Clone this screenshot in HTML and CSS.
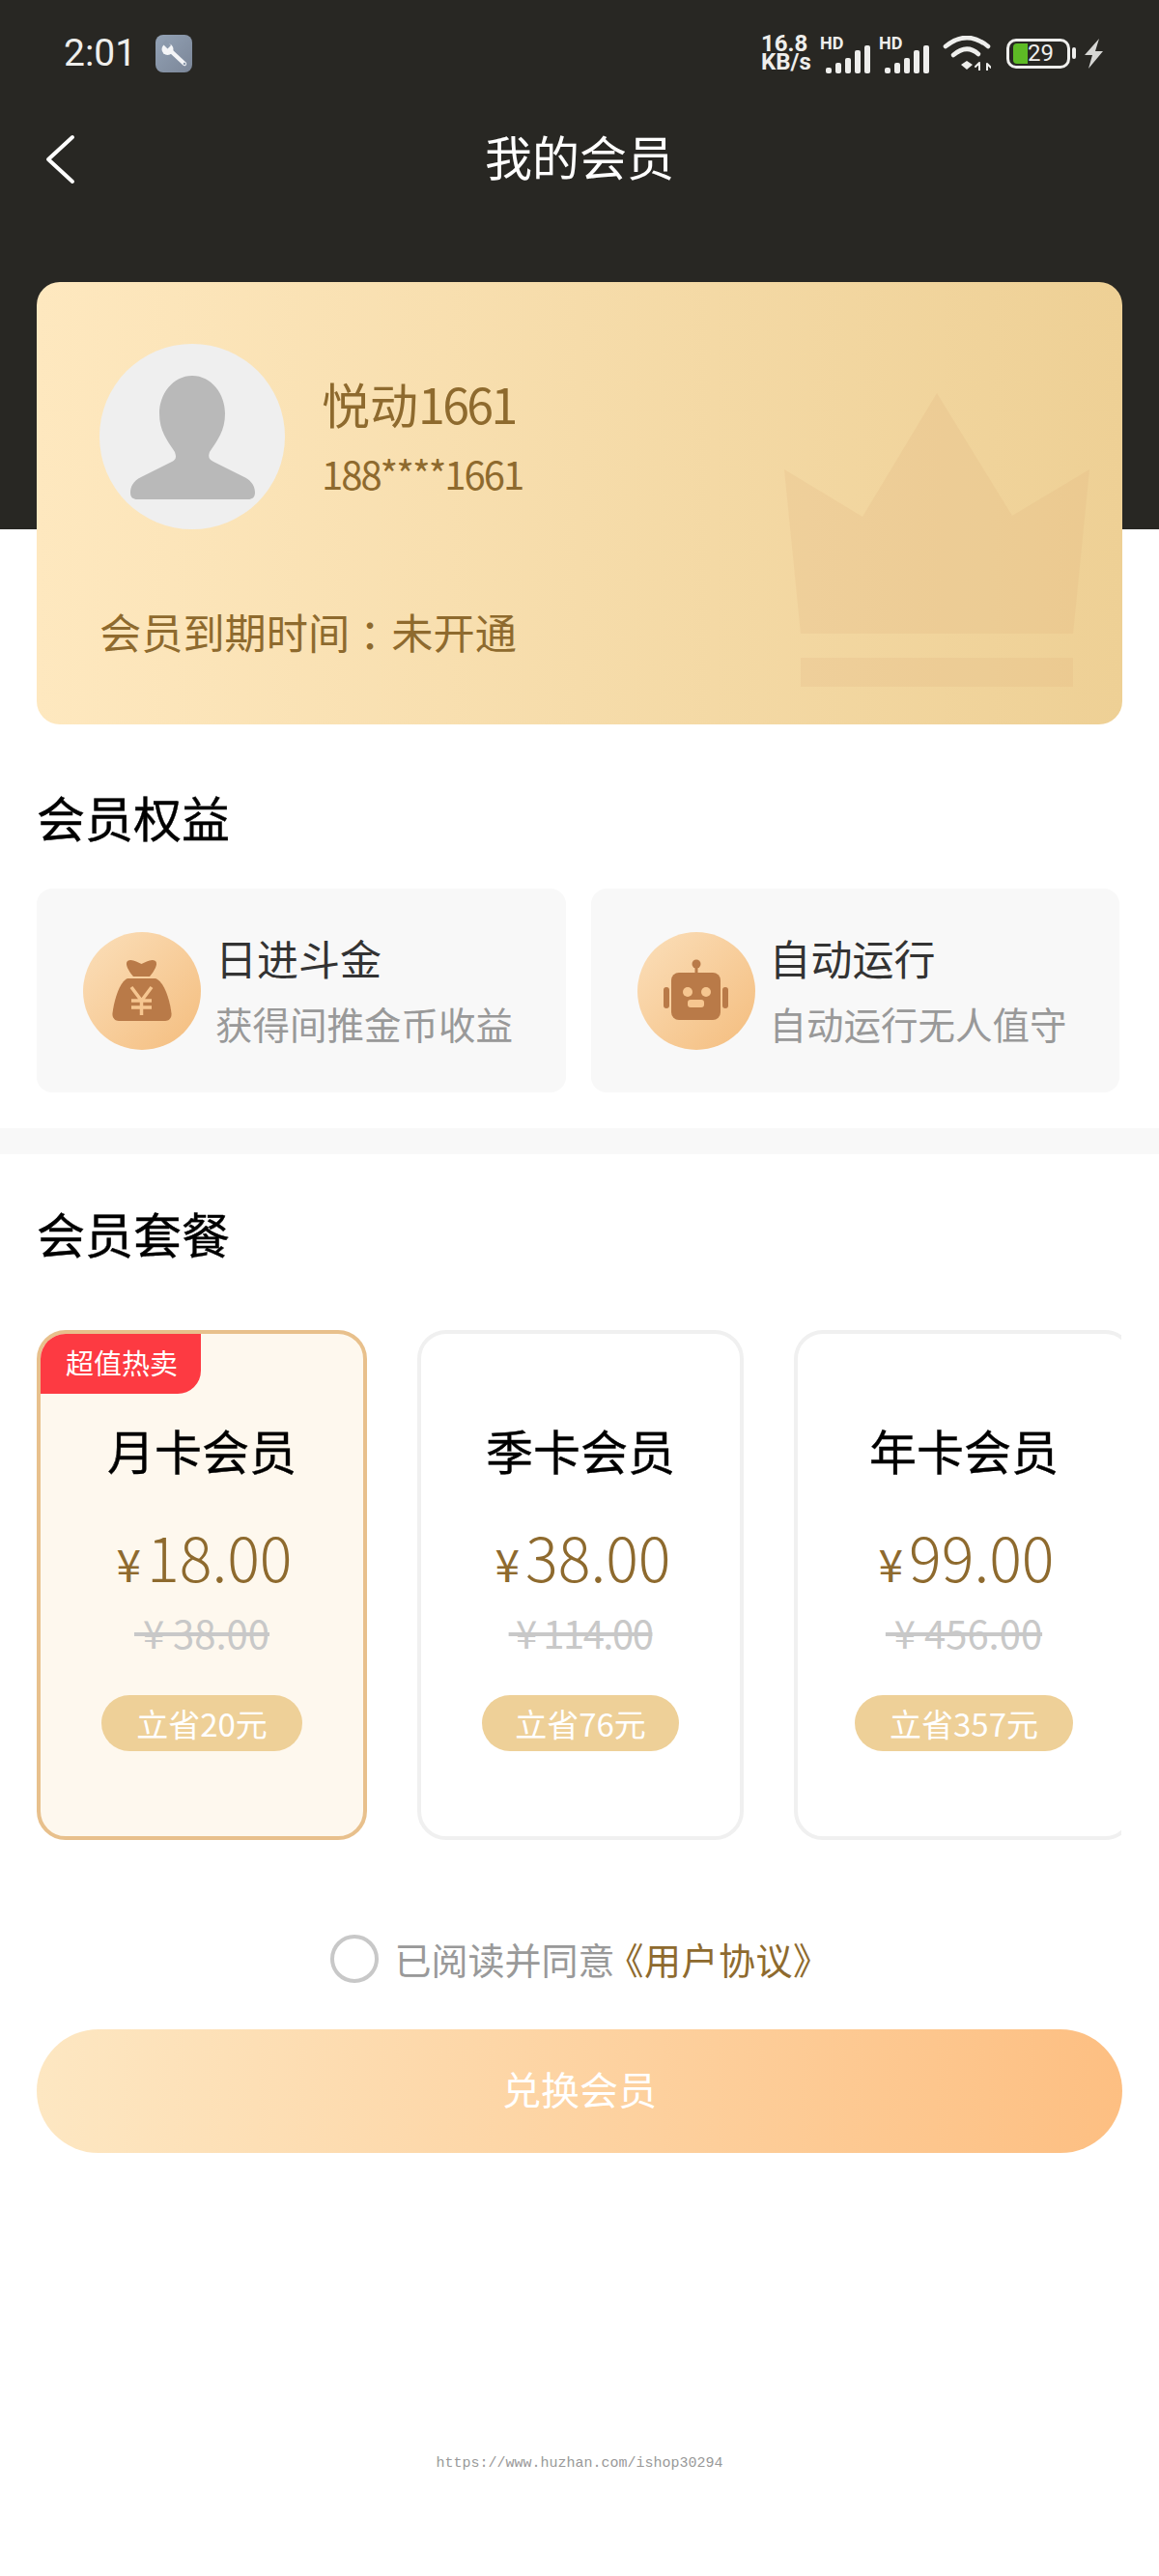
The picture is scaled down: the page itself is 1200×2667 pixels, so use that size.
FILE: index.html
```html
<!DOCTYPE html>
<html lang="zh-CN">
<head>
    <meta charset="UTF-8">
    <meta name="viewport" content="width=device-width, initial-scale=1.0">
    <title>我的会员</title>
    <link rel="stylesheet" href="styles.css">
</head>
<body>
    <div class="page">
        <div class="status-bar">
            <div class="status-left">
                <span class="status-time">2:01</span>
                <svg class="status-tool" width="38" height="39" viewBox="0 0 38 39">
                    <defs>
                        <linearGradient id="toolBg" x1="0" y1="0" x2="1" y2="1">
                            <stop offset="0" stop-color="#93a2b5"/>
                            <stop offset="1" stop-color="#7b8698"/>
                        </linearGradient>
                    </defs>
                    <rect width="38" height="39" rx="8" fill="url(#toolBg)"/>
                    <path d="M16 17 L30 30" stroke="#f4f5f7" stroke-width="4.4" stroke-linecap="round"/>
                    <circle cx="12.5" cy="15" r="6" fill="#f4f5f7"/>
                    <path d="M7 9 L12.500 14.500 L16 11 L11 5Z" fill="#8b99ab"/>
                    <circle cx="30" cy="30" r="1.3" fill="#8b99ab"/>
                </svg>
            </div>
            <div class="status-right">
                <div class="net-speed"><span>16.8</span><span>KB/s</span></div>
                <div class="signal signal-first">
                    <span class="signal-hd">HD</span>
                    <svg width="47" height="30" viewBox="0 0 47 30" fill="#eeeeec">
                        <rect x="0" y="24" width="6" height="6" rx="2"/>
                        <rect x="10" y="19" width="6" height="11" rx="2"/>
                        <rect x="20" y="14" width="6" height="16" rx="2"/>
                        <rect x="30" y="6" width="6" height="24" rx="2"/>
                        <rect x="40" y="1" width="6" height="29" rx="2"/>
                    </svg>
                </div>
                <div class="signal signal-second">
                    <span class="signal-hd">HD</span>
                    <svg width="47" height="30" viewBox="0 0 47 30" fill="#eeeeec">
                        <rect x="0" y="24" width="6" height="6" rx="2"/>
                        <rect x="10" y="19" width="6" height="11" rx="2"/>
                        <rect x="20" y="14" width="6" height="16" rx="2"/>
                        <rect x="30" y="6" width="6" height="24" rx="2"/>
                        <rect x="40" y="1" width="6" height="29" rx="2"/>
                    </svg>
                </div>
                <svg class="wifi" width="50" height="36" viewBox="0 0 50 36" fill="none" stroke="#eeeeec" stroke-linecap="round">
                    <path d="M3 11 Q25 -7 47 11" stroke-width="4.6"/>
                    <path d="M11 20 Q25 8 37 19" stroke-width="4.6"/>
                    <path d="M19 30 L25 26 L31 30 L25 35Z" fill="#eeeeec" stroke="none"/>
                    <path d="M38 36 L38 29 M34 32 L38 28 M46 36 L46 29 M46 29 L50 33" stroke-width="2"/>
                </svg>
                <div class="battery">
                    <div class="battery-body">
                        <div class="battery-fill"></div>
                        <span class="battery-num">29</span>
                    </div>
                    <div class="battery-nub"></div>
                </div>
                <svg class="bolt" width="20" height="31" viewBox="0 0 20 31">
                    <path d="M16 0 L1 17 L9 17 L5 31 L20 13 L12 13Z" fill="#d6d6d4"/>
                </svg>
            </div>
        </div>

        <div class="nav-bar">
            <svg class="nav-back" width="32" height="52" viewBox="0 0 32 52">
                <path d="M28 3 L3 26 L28 49" fill="none" stroke="#fff" stroke-width="4" stroke-linecap="round" stroke-linejoin="round"/>
            </svg>
            <div class="nav-title">我的会员</div>
        </div>

        <div class="member-card">
            <svg class="crown" width="320" height="310" viewBox="0 0 320 310">
                <path d="M0 79 L81 128 L158 0 L236 127 L316 79 L299 249 L17 249Z"/>
                <rect x="17" y="274" width="282" height="30"/>
            </svg>
            <div class="user-row">
                <svg class="avatar" width="192" height="192" viewBox="0 0 192 192">
                    <circle cx="96" cy="96" r="96" fill="#efefef"/>
                    <path d="M96 33 C116 33 130 52 130 72 C130 90 122 100 114 112 C112 118 114 120 118 122 L150 138 C158 142 161 148 161 154 C161 159 158 161 154 161 L39 161 C35 161 32 159 32 154 C32 148 35 142 43 138 L75 122 C79 120 80 118 78 112 C70 100 62 90 62 72 C62 52 76 33 96 33Z" fill="#b9b9b9"/>
                </svg>
                <div class="user-info">
                    <div class="user-name">悦动<span class="user-digits">1661</span></div>
                    <div class="user-phone">188****1661</div>
                </div>
            </div>
            <div class="expire">会员到期时间<span class="full-colon">：</span>未开通</div>
        </div>

        <h2 class="section-title title-benefits">会员权益</h2>
        <div class="benefits">
            <div class="benefit">
                <svg class="benefit-icon" width="122" height="122" viewBox="0 0 122 122">
                    <defs>
                        <linearGradient id="iconBg" x1="0" y1="0" x2="1" y2="1">
                            <stop offset="0" stop-color="#fbdfba"/>
                            <stop offset="1" stop-color="#f4bd7e"/>
                        </linearGradient>
                    </defs>
                    <circle cx="61" cy="61" r="61" fill="url(#iconBg)"/>
                    <path d="M46 30 C50 27 56 31 60.500 33 C65 31 71 27 75 30 C78 33 74 40 69 46 L52 46 C47 40 43 33 46 30Z" fill="#b97a48"/>
                    <path d="M46 48 L75 48 C85 52 90 72 91.500 84 C92 89 89 92 85 92 L37 92 C33 92 30 89 30.500 84 C32 72 37 52 46 48Z" fill="#b97a48"/>
                    <path d="M50 57 L60.500 71 L71 57 M60.500 71 L60.500 86 M50 71 L71 71 M50 78 L71 78" fill="none" stroke="#f6c690" stroke-width="3.500"/>
                </svg>
                <div class="benefit-text">
                    <div class="benefit-title">日进斗金</div>
                    <div class="benefit-sub">获得间推金币收益</div>
                </div>
            </div>
            <div class="benefit">
                <svg class="benefit-icon" width="122" height="122" viewBox="0 0 122 122">
                    <circle cx="61" cy="61" r="61" fill="url(#iconBg)"/>
                    <circle cx="61" cy="33" r="4.500" fill="#b97a48"/>
                    <rect x="59.500" y="33" width="3" height="10" fill="#b97a48"/>
                    <rect x="35" y="42" width="51" height="49" rx="8" fill="#b97a48"/>
                    <rect x="27" y="57" width="6" height="22" rx="3" fill="#b97a48"/>
                    <rect x="88" y="57" width="6" height="22" rx="3" fill="#b97a48"/>
                    <circle cx="52" cy="62" r="5" fill="#f6c690"/>
                    <circle cx="71" cy="62" r="5" fill="#f6c690"/>
                    <rect x="52" y="70" width="17" height="8" rx="3" fill="#f6c690"/>
                </svg>
                <div class="benefit-text">
                    <div class="benefit-title">自动运行</div>
                    <div class="benefit-sub">自动运行无人值守</div>
                </div>
            </div>
        </div>

        <div class="divider"></div>

        <h2 class="section-title title-plans">会员套餐</h2>
        <div class="plans">
            <div class="plan plan-month plan-active">
                <div class="plan-badge">超值热卖</div>
                <div class="plan-name">月卡会员</div>
                <div class="plan-price"><span class="plan-yen">¥</span>18.00</div>
                <div class="plan-old">&nbsp;¥ 38.00</div>
                <div class="plan-save">立省20元</div>
            </div>
            <div class="plan plan-season">
                <div class="plan-name">季卡会员</div>
                <div class="plan-price"><span class="plan-yen">¥</span>38.00</div>
                <div class="plan-old">&nbsp;¥ 114.00</div>
                <div class="plan-save">立省76元</div>
            </div>
            <div class="plan plan-year">
                <div class="plan-name">年卡会员</div>
                <div class="plan-price"><span class="plan-yen">¥</span>99.00</div>
                <div class="plan-old">&nbsp;¥ 456.00</div>
                <div class="plan-save">立省357元</div>
            </div>
        </div>

        <div class="agreement">
            <span class="agree-check"></span>
            <span class="agree-text">已阅读并同意<span class="agree-link">《用户协议》</span></span>
        </div>

        <div class="submit-btn">兑换会员</div>

        <div class="watermark">https://www.huzhan.com/ishop30294</div>
    </div>
</body>
</html>
```

FILE: styles.css
```css
:root {
    --fontFamily: "Noto Sans CJK SC", "Noto Sans", sans-serif;
    --colorDark: #282723;
    --colorGold: #8e6a2e;
    --colorPill: #eed098;
}

html, body {
    margin: 0;
    padding: 0;
    background: #fff;
}

.page {
    width: 1200px;
    height: 2667px;
    overflow: hidden;
    font-family: var(--fontFamily);
    background: linear-gradient(var(--colorDark) 548px, #fff 548px);
}

/* status bar */
.status-bar {
    height: 110px;
    display: flex;
    justify-content: space-between;
    align-items: center;
    padding: 0 58px 0 66px;
    color: #eeeeec;
}

.status-left {
    display: flex;
    align-items: center;
    gap: 20px;
}

.status-time {
    font-family: Roboto, sans-serif;
    font-size: 39px;
    font-weight: 400;
}

.status-right {
    display: flex;
    align-items: center;
}

.net-speed {
    display: flex;
    flex-direction: column;
    font-family: Roboto, sans-serif;
    font-size: 24px;
    font-weight: 700;
    line-height: 19px;
    width: 61px;
}

.signal {
    position: relative;
    padding-left: 6px;
    padding-top: 11px;
    display: flex;
}

.signal-second {
    margin-left: 8px;
}

.signal-hd {
    position: absolute;
    left: 0;
    top: 2px;
    font-family: Roboto, sans-serif;
    font-size: 18px;
    font-weight: 700;
    line-height: 16px;
}

.wifi {
    margin-left: 13px;
}

.battery {
    display: flex;
    align-items: center;
    margin-left: 16px;
}

.battery-body {
    width: 66px;
    height: 31px;
    box-sizing: border-box;
    border: 3px solid #eeeeec;
    border-radius: 10px;
    display: flex;
    align-items: center;
    padding-left: 4px;
}

.battery-fill {
    width: 15px;
    height: 21px;
    background: #5dbb25;
    border-radius: 4px 0 0 4px;
}

.battery-num {
    font-family: Roboto, sans-serif;
    font-size: 24px;
    line-height: 25px;
}

.battery-nub {
    width: 4px;
    height: 12px;
    margin-left: 2px;
    background: #eeeeec;
    border-radius: 2px;
}

.bolt {
    margin-left: 8px;
}

/* title bar */
.nav-bar {
    height: 108px;
    display: flex;
    align-items: center;
    justify-content: center;
    position: relative;
}

.nav-back {
    position: absolute;
    left: 47px;
    top: 29px;
}

.nav-title {
    margin-top: -6px;
    color: #fff;
    font-size: 49px;
    line-height: 60px;
}

/* member card */
.member-card {
    position: relative;
    margin: 74px 38px 0;
    height: 458px;
    box-sizing: border-box;
    padding: 64px 65px 0;
    border-radius: 24px;
    background: linear-gradient(90deg, #fee8bf 0%, #eed095 100%);
    overflow: hidden;
    color: var(--colorGold);
}

.crown {
    position: absolute;
    left: 774px;
    top: 115px;
    fill: rgba(222, 170, 120, 0.18);
}

.user-row {
    display: flex;
    align-items: center;
    gap: 38px;
    position: relative;
}

.user-info {
    margin-top: -3px;
}

.user-name {
    font-size: 50px;
    line-height: 66px;
}

.user-digits {
    letter-spacing: -2.6px;
}

.user-phone {
    margin-top: 12px;
    font-size: 40px;
    line-height: 56px;
    letter-spacing: -2px;
}

.expire {
    position: relative;
    margin-top: 75px;
    font-size: 43.200px;
    line-height: 60px;
}

.full-colon {
    padding-left: 10px;
    letter-spacing: -10px;
}

/* section headers */
.section-title {
    margin: 0 0 0 38px;
    font-size: 50px;
    font-weight: 400;
    line-height: 60px;
    color: #000;
    -webkit-text-stroke: 0.4px #000;
}

.title-benefits {
    margin-top: 65px;
}

.title-plans {
    margin-top: 51px;
}

/* benefits */
.benefits {
    display: flex;
    gap: 26px;
    margin: 45px 41px 0 38px;
}

.benefit {
    flex: 1;
    height: 211px;
    display: flex;
    align-items: center;
    gap: 15px;
    padding-left: 48px;
    background: #f8f8f8;
    border-radius: 16px;
}

.benefit-icon {
    flex: none;
}

.benefit-text {
    margin-top: -4px;
}

.benefit-title {
    font-size: 43px;
    line-height: 60px;
    color: #333;
}

.benefit-sub {
    margin-top: 10px;
    font-size: 38.500px;
    line-height: 56px;
    color: #999;
    white-space: nowrap;
}

.divider {
    height: 27px;
    margin-top: 37px;
    background: #f8f8f8;
}

/* plans */
.plans {
    display: flex;
    gap: 52px;
    margin: 71px 39px 0 38px;
    overflow: hidden;
}

.plan {
    position: relative;
    flex: none;
    height: 528px;
    box-sizing: border-box;
    display: flex;
    flex-direction: column;
    align-items: center;
    padding-top: 90px;
    background: #fff;
    border: 4px solid #f0f0f0;
    border-radius: 30px;
}

.plan-month {
    width: 342px;
}

.plan-season {
    width: 338px;
}

.plan-year {
    width: 352px;
}

.plan-active {
    background: #fef8ee;
    border-color: #e8c08c;
}

.plan-badge {
    position: absolute;
    left: 0;
    top: 0;
    width: 166px;
    height: 62px;
    box-sizing: border-box;
    padding-left: 26px;
    font-size: 29px;
    line-height: 58px;
    color: #fff;
    background: #fd3a42;
    border-radius: 26px 0 24px 0;
}

.plan-name {
    font-size: 49px;
    line-height: 60px;
    color: #000;
    -webkit-text-stroke: 0.4px #000;
}

.plan-price {
    margin-top: 40px;
    margin-left: 5px;
    font-size: 63px;
    font-weight: 300;
    line-height: 80px;
    color: var(--colorGold);
}

.plan-yen {
    font-size: 46px;
    font-weight: 400;
    margin-right: 6px;
}

.plan-old {
    margin-top: 10px;
    font-size: 40px;
    line-height: 44px;
    color: #c8c8c8;
    text-decoration: line-through;
}

.plan-season .plan-old {
    letter-spacing: -1.5px;
}

.plan-save {
    margin-top: 43px;
    height: 58px;
    padding: 0 36px;
    font-size: 33px;
    line-height: 58px;
    color: #fff;
    background: var(--colorPill);
    border-radius: 29px;
}

.plan-season .plan-save {
    padding: 0 34px;
}

/* agreement + button */
.agreement {
    margin-top: 93px;
    padding-left: 2px;
    height: 60px;
    display: flex;
    align-items: center;
    justify-content: center;
    gap: 16px;
}

.agree-check {
    width: 50px;
    height: 50px;
    box-sizing: border-box;
    border: 4px solid #c8c8c8;
    border-radius: 50%;
}

.agree-text {
    font-size: 38px;
    line-height: 60px;
    color: #999;
}

.agree-link {
    margin-left: -8px;
    letter-spacing: 0.5px;
    color: var(--colorGold);
}

.submit-btn {
    margin: 43px 38px 0;
    height: 128px;
    border-radius: 64px;
    background: linear-gradient(90deg, #fde7c2 0%, #fdbf82 100%);
    color: #fff;
    font-size: 40px;
    line-height: 122px;
    text-align: center;
}

.watermark {
    margin-top: 312px;
    text-align: center;
    font-family: "Liberation Mono", monospace;
    font-size: 15px;
    line-height: 20px;
    color: #999;
}
```
